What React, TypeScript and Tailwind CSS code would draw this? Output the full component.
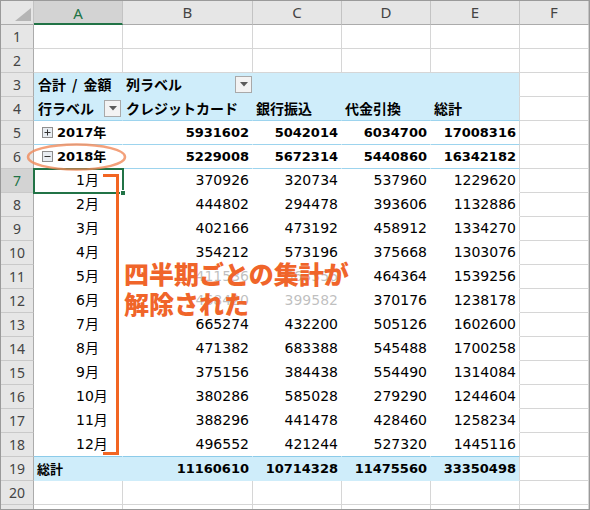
import React from 'react';

// pivot data: label, credit card, bank transfer, cash on delivery, total
const MONTHS: string[][] = [
  ['1月', '370926', '320734', '537960', '1229620'],
  ['2月', '444802', '294478', '393606', '1132886'],
  ['3月', '402166', '473192', '458912', '1334270'],
  ['4月', '354212', '573196', '375668', '1303076'],
  ['5月', '411536', '663356', '464364', '1539256'],
  ['6月', '468420', '399582', '370176', '1238178'],
  ['7月', '665274', '432200', '505126', '1602600'],
  ['8月', '471382', '683388', '545488', '1700258'],
  ['9月', '375156', '384438', '554490', '1314084'],
  ['10月', '380286', '585028', '279290', '1244604'],
  ['11月', '388296', '441478', '428460', '1258234'],
  ['12月', '496552', '421244', '527320', '1445116'],
];

const YEARS = [
  { label: '2017年', open: false, vals: ['5931602', '5042014', '6034700', '17008316'] },
  { label: '2018年', open: true, vals: ['5229008', '5672314', '5440860', '16342182'] },
];

const TOTAL = ['11160610', '10714328', '11475560', '33350498'];

function RowHead({ n, label = true }: { n: number; label?: boolean }) {
  const active = n === 7;
  return (
    <div className={`flex items-center justify-center border-r border-b border-r-[#ababab] border-b-[#c9c9c9] font-['Noto_Sans',sans-serif] text-[14px] ${active ? 'bg-[#d3d3d3] text-[#217346]' : 'bg-[#e6e6e6] text-[#444]'}`}>
      {label ? n : null}
    </div>
  );
}

function Blank() {
  return <div className="border-r border-b border-[#d6d6d6] bg-white" />;
}

function DropButton() {
  return (
    <span className="ml-auto flex h-[17px] w-[17px] items-center justify-center border border-[#a9a9a9] bg-[#f3f3f3]">
      <svg width="8" height="5" viewBox="0 0 8 5">
        <path d="M0 0 H8 L4 4.5 Z" fill="#5b5b5b" />
      </svg>
    </span>
  );
}

function ToggleBox({ open }: { open: boolean }) {
  return (
    <svg width="11" height="11" viewBox="0 0 11 11" className="mr-[4px] shrink-0">
      <rect x="0.5" y="0.5" width="10" height="10" fill="#e8edf2" stroke="#8e8e8e" />
      <path d="M2.5 5.5 H8.5" stroke="#333" strokeWidth="1" />
      {!open && <path d="M5.5 2.5 V8.5" stroke="#333" strokeWidth="1" />}
    </svg>
  );
}

export default function App() {
  const jp = "font-['Noto_Sans_CJK_JP',sans-serif]";
  return (
    <div className="relative h-[510px] w-[590px] overflow-hidden border border-[#9a9a9a] bg-white font-['DejaVu_Sans','Noto_Sans_CJK_JP',sans-serif] text-[14px] text-black">
      <div className="grid grid-cols-[33px_89px_130px_89px_89px_89px_69px] grid-rows-[24px_repeat(21,24px)]">
        {/* column headers */}
        <div className="relative border-r border-b border-r-[#c3c3c3] border-b-[#ababab] bg-[#e6e6e6]">
          <svg width="16" height="13" viewBox="0 0 16 13" className="absolute right-[2px] bottom-[3px]">
            <path d="M16 0 V13 H0 Z" fill="#b5b5b5" />
          </svg>
        </div>
        <div className="flex items-center justify-center border-r border-b-2 border-r-[#c3c3c3] border-b-[#217346] bg-[#d3d3d3] pt-[2px] font-['Noto_Sans',sans-serif] text-[15px] text-[#217346]">A</div>
        {['B', 'C', 'D', 'E', 'F'].map((c) => (
          <div key={c} className="flex items-center justify-center border-r border-b border-r-[#c3c3c3] border-b-[#ababab] bg-[#e6e6e6] font-['Noto_Sans',sans-serif] text-[15px] text-[#444]">
            {c}
          </div>
        ))}

        {/* rows 1-2 */}
        {[1, 2].map((n) => (
          <React.Fragment key={n}>
            <RowHead n={n} />
            <Blank /><Blank /><Blank /><Blank /><Blank /><Blank />
          </React.Fragment>
        ))}

        {/* row 3 */}
        <RowHead n={3} />
        <div className={`flex items-center border-r border-b border-transparent bg-[#cfedfa] pl-[4px] font-bold whitespace-nowrap ${jp}`}>
          合計<span className="mx-[6px]">/</span>金額
        </div>
        <div className={`flex items-center border-r border-b border-transparent bg-[#cfedfa] pl-[3px] pr-[0px] font-bold whitespace-nowrap ${jp}`}>
          列ラベル
          <DropButton />
        </div>
        <div className="border-r border-b border-transparent bg-[#cfedfa]" />
        <div className="border-r border-b border-transparent bg-[#cfedfa]" />
        <div className="border-r border-b border-r-[#d6d6d6] border-b-transparent bg-[#cfedfa]" />
        <Blank />

        {/* row 4 */}
        <RowHead n={4} />
        <div className={`flex items-center border-r border-b border-r-transparent border-b-[#9dd4ee] bg-[#cfedfa] pl-[4px] pr-[1px] font-bold whitespace-nowrap ${jp}`}>
          行ラベル
          <DropButton />
        </div>
        <div className={`flex items-center border-r border-b border-r-transparent border-b-[#9dd4ee] bg-[#cfedfa] pl-[3px] font-bold whitespace-nowrap ${jp}`}>クレジットカード</div>
        <div className={`flex items-center border-r border-b border-r-transparent border-b-[#9dd4ee] bg-[#cfedfa] pl-[3px] font-bold whitespace-nowrap ${jp}`}>銀行振込</div>
        <div className={`flex items-center border-r border-b border-r-transparent border-b-[#9dd4ee] bg-[#cfedfa] pl-[3px] font-bold whitespace-nowrap ${jp}`}>代金引換</div>
        <div className={`flex items-center border-r border-b border-r-[#d6d6d6] border-b-[#9dd4ee] bg-[#cfedfa] pl-[3px] font-bold whitespace-nowrap ${jp}`}>総計</div>
        <Blank />

        {/* rows 5-6: years */}
        {YEARS.map((y, i) => (
          <React.Fragment key={y.label}>
            <RowHead n={5 + i} />
            <div className="flex items-center border-r border-b border-r-transparent border-b-[#9dd4ee] pl-[8px] text-[13px] font-bold whitespace-nowrap">
              <ToggleBox open={y.open} />
              {y.label}
            </div>
            {y.vals.map((v, j) => (
              <div key={j} className={`flex items-center justify-end border-r border-b border-b-[#9dd4ee] pr-[3px] text-[13px] font-bold ${j === 3 ? 'border-r-[#d6d6d6]' : 'border-r-transparent'}`}>
                {v}
              </div>
            ))}
            <Blank />
          </React.Fragment>
        ))}

        {/* rows 7-18: months */}
        {MONTHS.map((m, i) => (
          <React.Fragment key={m[0]}>
            <RowHead n={7 + i} />
            <div className={`flex items-center border-r border-b border-r-transparent pl-[42px] whitespace-nowrap ${i === 11 ? 'border-b-[#8ccbe9]' : 'border-b-transparent'}`}>
              {m[0]}
            </div>
            {m.slice(1).map((v, j) => (
              <div key={j} className={`flex items-center justify-end border-r border-b pr-[3px] ${j === 3 ? 'border-r-[#d6d6d6]' : 'border-r-transparent'} ${i === 11 ? 'border-b-[#8ccbe9]' : 'border-b-transparent'}`}>
                {v}
              </div>
            ))}
            <Blank />
          </React.Fragment>
        ))}

        {/* row 19: grand total */}
        <RowHead n={19} />
        <div className={`flex items-center border-r border-b border-transparent bg-[#cfedfa] pl-[3px] text-[13px] font-bold ${jp}`}>総計</div>
        {TOTAL.map((v, j) => (
          <div key={j} className={`flex items-center justify-end border-r border-b border-b-transparent bg-[#cfedfa] pr-[3px] text-[13px] font-bold ${j === 3 ? 'border-r-[#d6d6d6]' : 'border-r-transparent'}`}>
            {v}
          </div>
        ))}
        <Blank />

        {/* row 20, plus the sliver of row 21 at the bottom edge */}
        <RowHead n={20} />
        <Blank /><Blank /><Blank /><Blank /><Blank /><Blank />
        <RowHead n={21} label={false} />
        <Blank /><Blank /><Blank /><Blank /><Blank /><Blank />
      </div>

      {/* active cell A7 */}
      <div className="pointer-events-none absolute top-[167px] left-[32px] h-[26px] w-[91px] border-2 border-[#217346]" />
      <div className="pointer-events-none absolute top-[189px] left-[119px] h-[6px] w-[6px] border border-white bg-[#217346]" />

      {/* annotation marks */}
      <svg className="pointer-events-none absolute top-[-1px] left-[-1px]" width="590" height="510" viewBox="0 0 590 510">
        <ellipse cx="76.5" cy="157" rx="48.5" ry="12.5" fill="none" stroke="#f0895a" strokeOpacity="0.8" strokeWidth="2.5" />
        <path d="M103 175.5 H117.5 V453.5 H103" fill="none" stroke="#f26522" strokeWidth="3" />
      </svg>

      <div className="pointer-events-none absolute top-[262px] left-[122px] h-[51px] w-[229px] bg-white/75" />
      <div className={`pointer-events-none absolute top-[257px] left-[123px] text-[25px] leading-[30px] font-black whitespace-nowrap text-[#f0652a] ${jp}`}>
        <div>四半期ごとの集計が</div>
        <div>解除された</div>
      </div>
    </div>
  );
}
